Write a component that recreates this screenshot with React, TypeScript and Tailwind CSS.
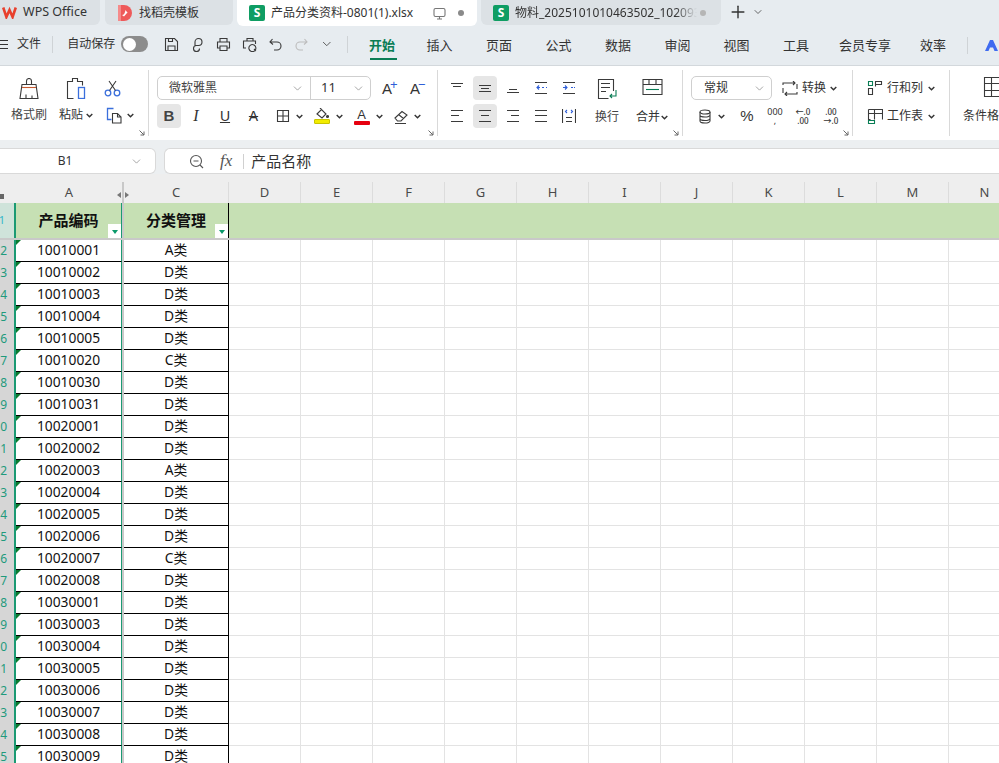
import React from "react";
import { ChevronDown, Plus } from "lucide-react";

const cjk = "font-['Noto_Sans','Noto_Sans_CJK_SC',sans-serif]";

const rows: [string, string, string][] = [
  ["2", "10010001", "A类"],
  ["3", "10010002", "D类"],
  ["4", "10010003", "D类"],
  ["5", "10010004", "D类"],
  ["6", "10010005", "D类"],
  ["7", "10010020", "C类"],
  ["8", "10010030", "D类"],
  ["9", "10010031", "D类"],
  ["10", "10020001", "D类"],
  ["11", "10020002", "D类"],
  ["12", "10020003", "A类"],
  ["13", "10020004", "D类"],
  ["14", "10020005", "D类"],
  ["15", "10020006", "D类"],
  ["16", "10020007", "C类"],
  ["17", "10020008", "D类"],
  ["18", "10030001", "D类"],
  ["19", "10030003", "D类"],
  ["20", "10030004", "D类"],
  ["21", "10030005", "D类"],
  ["22", "10030006", "D类"],
  ["23", "10030007", "D类"],
  ["24", "10030008", "D类"],
  ["25", "10030009", "D类"],
];

const emptyCols = ["D", "E", "F", "G", "H", "I", "J", "K", "L", "M", "N"];
const menus = [
  ["插入", "w-[59px]"],
  ["页面", "w-[60px]"],
  ["公式", "w-[59px]"],
  ["数据", "w-[60px]"],
  ["审阅", "w-[59px]"],
  ["视图", "w-[59px]"],
  ["工具", "w-[60px]"],
  ["会员专享", "w-[78px]"],
  ["效率", "w-[58px]"],
];

function Ico({ w = 18, h = 18, vb, children, className = "" }: { w?: number; h?: number; vb?: string; children: React.ReactNode; className?: string }) {
  return (
    <svg width={w} height={h} viewBox={vb ?? `0 0 ${w} ${h}`} fill="none" stroke="#3a3a3a" strokeWidth="1.1" className={`shrink-0 ${className}`}>
      {children}
    </svg>
  );
}

function Chev({ className = "" }: { className?: string }) {
  return (
    <svg width="7" height="5" viewBox="0 0 7 5" fill="none" stroke="#333" strokeWidth="1.4" className={`shrink-0 ${className}`}>
      <path d="M.7 1 3.500 3.800 6.300 1" />
    </svg>
  );
}

function Launcher() {
  return (
    <svg width="6" height="6" viewBox="0 0 6 6" fill="none" stroke="#666" className="absolute right-[3px] bottom-0">
      <path d="M.5.5 5 5M5 1.500V5H1.500" />
    </svg>
  );
}

function Slot({ w, active, children }: { w: string; active?: boolean; children: React.ReactNode }) {
  return <div className={`${w} h-6 flex items-center justify-center rounded shrink-0 ${active ? "bg-[#e6e6e6]" : ""}`}>{children}</div>;
}

function Lines({ d, blue }: { d: string; blue?: string }) {
  return (
    <Ico w={14} h={14}>
      <path d={d} />
      {blue && <path d={blue} stroke="#2f5fd8" />}
    </Ico>
  );
}

function TabBar() {
  return (
    <div className={`h-[26px] flex ${cjk}`}>
      <div className="w-[100px] h-[25px] bg-[#dce1e5] rounded-br-md flex items-center pl-[2px] gap-[6px]">
        <svg width="15" height="13" viewBox="0 0 15 13" fill="none" stroke="#e8402d" strokeWidth="2.6">
          <path d="M1.200 1.500 4.400 11 7.500 4 10.600 11 13.800 1.500" />
        </svg>
        <span className="text-[12.5px] text-[#333]">WPS Office</span>
      </div>
      <div className="w-[128px] h-[25px] ml-[5px] bg-[#dce1e5] rounded-b-md flex items-center pl-[13px] gap-[7px]">
        <svg width="14" height="16" viewBox="0 0 14 16">
          <path d="M0 0h6a8 8 0 0 1 0 16H0z" fill="#ee5a5a" />
          <path d="M0 0h3v16H0z" fill="#f58a8a" />
          <path d="M4 10c2 0 3-2 3.500-5 .8 1.500 2 2 2 3-1 0-2 2-3.500 3.500z" fill="#fff" />
        </svg>
        <span className="text-[12px] text-[#333]">找稻壳模板</span>
      </div>
      <div className="w-[240px] h-[26px] ml-[4px] bg-white rounded-b-md flex items-center pl-[12px]">
        <div className="w-[16px] h-[16px] bg-[#0f9d63] rounded-[2px] text-white text-[12px] font-bold flex items-center justify-center">S</div>
        <span className="ml-[6px] text-[12px] text-[#333] whitespace-nowrap">产品分类资料-0801(1).xlsx</span>
        <Ico w={13} h={13} className="ml-[20px]">
          <rect x="1" y="1.500" width="11" height="8" rx="1.500" stroke="#777" />
          <path d="M4 12h5M6.500 9.500V12" stroke="#777" />
        </Ico>
        <div className="ml-[12px] w-[6px] h-[6px] rounded-full bg-[#8a8a8a]" />
      </div>
      <div className="w-[240px] h-[25px] ml-[4px] bg-[#dce1e5] rounded-b-md flex items-center pl-[12px] overflow-hidden">
        <div className="w-[16px] h-[16px] bg-[#0f9d63] rounded-[2px] text-white text-[12px] font-bold flex items-center justify-center shrink-0">S</div>
        <span className="ml-[6px] w-[182px] overflow-hidden text-[12px] text-[#333] whitespace-nowrap [mask-image:linear-gradient(to_right,black_88%,transparent)]">物料_2025101010463502_1020930</span>
        <div className="ml-[3px] w-[6px] h-[6px] rounded-full bg-[#b5b5b5]" />
      </div>
      <Plus size={20} strokeWidth={1.7} className="ml-[7px] mt-[2px] text-[#333]" />
      <ChevronDown size={12} strokeWidth={1.6} className="ml-[4px] mt-[6px] text-[#444]" />
    </div>
  );
}

function MenuBar() {
  return (
    <div className={`h-[40px] flex items-center text-[13px] text-[#333] border-b border-[#d3d8dc] ${cjk}`}>
      <svg width="11" height="11" viewBox="0 0 11 11" stroke="#333" className="shrink-0 -mt-[3px]">
        <path d="M0 1.500h8M0 5.500h8M0 9.500h8" />
      </svg>
      <span className="ml-[6px] w-[25px] text-[12px] -mt-[3px]">文件</span>
      <div className="ml-[11px] w-px h-[17px] bg-[#cfd3d6] -mt-[3px]" />
      <span className="ml-[14px] w-[48px] text-[12px] whitespace-nowrap -mt-[3px]">自动保存</span>
      <div className="ml-[6px] w-[28px] h-[16px] rounded-full bg-[#8c8c8c] flex items-center px-[1.5px] -mt-[3px]">
        <div className="w-[13px] h-[13px] rounded-full bg-white" />
      </div>
      <div className="ml-[16px] flex items-center gap-[11px] -mt-[3px]">
        <Ico w={15} h={15}><path d="M1.500 1.500h9l3 3v9h-12zM4.500 1.500v3h4v-3M4 13.500V9h7v4.500" /></Ico>
        <Ico w={15} h={15}><path d="M5 9V5a3.500 3.500 0 1 1 3.500 3.500H6.500a3 3 0 1 0 3 3" /></Ico>
        <Ico w={15} h={15}><path d="M4 5V1.500h7V5M4 11H1.500V5h12v6H11M4 9h7v4.500H4z" /></Ico>
        <Ico w={15} h={15}><path d="M5 4V1.500h6V4M4 11H1.500V4h12v3M7 12a3.500 3.500 0 1 0 5-4 3.500 3.500 0 0 0-5 4zM12 12l2 2" /></Ico>
        <Ico w={15} h={15}><path d="M4.500 2 2 5l3 2.500M2 5h7a3.500 3.500 0 0 1 0 8H6" /></Ico>
        <Ico w={15} h={15}><path d="M10.500 2 13 5l-3 2.500M13 5H6a3.500 3.500 0 0 0 0 8h3" stroke="#bcbcbc" /></Ico>
      </div>
      <ChevronDown size={14} strokeWidth={1.5} className="ml-[11px] text-[#444] -mt-[3px]" />
      <div className="ml-[13px] w-px h-[17px] bg-[#cfd3d6] -mt-[3px]" />
      <div className="ml-[6px] w-[58px] h-[39px] flex items-center justify-center relative">
        <span className="text-[#0a7d55] font-bold">开始</span>
        <div className="absolute bottom-[5px] left-[16px] w-[27px] h-[2px] bg-[#0a7d55]" />
      </div>
      {menus.map(([m, w]) => (
        <span key={m} className={`${w} text-center shrink-0`}>{m}</span>
      ))}
      <div className="ml-[5px] w-px h-[17px] bg-[#cfd3d6]" />
      <svg width="14" height="11" viewBox="0 0 14 11" className="ml-[17px] shrink-0">
        <path d="M0 11 5 0h3l5 11H9.500L8 7.500H5L3.500 11z" fill="#3f6bf0" />
      </svg>
    </div>
  );
}

function Ribbon() {
  return (
    <div className={`h-[74px] bg-white flex text-[#333] text-[12px] ${cjk}`}>
      {/* 剪贴板 */}
      <div className="relative w-[149px] shrink-0 border-r border-[#d9d9d9] my-[4px] pl-[9px]">
        <div className="flex h-[36px] items-center">
          <div className="w-[40px] flex justify-center">
            <Ico w={20} h={21}>
              <path d="M7.500 6.500V3a2.500 2.500 0 0 1 5 0v3.500M3 6.500h14l2 14H1zM7 20.500v-4M13 20.500v-3" />
              <path d="M3 9.500h14" stroke="#c55a30" />
            </Ico>
          </div>
          <div className="w-[50px] flex justify-center ml-[2px]">
            <Ico w={22} h={21}>
              <path d="M4.500 3.500h3v-3h5v3h5v4M8.500 20.500h-6v-17h2" />
              <rect x="13.500" y="9.500" width="6" height="11" stroke="#3a6fdc" strokeWidth="1.300" />
            </Ico>
          </div>
          <Ico w={17} h={17} className="ml-[3px]">
            <circle cx="4" cy="13" r="2.800" stroke="#3a6fdc" strokeWidth="1.300" />
            <circle cx="13" cy="13" r="2.800" stroke="#3a6fdc" strokeWidth="1.300" />
            <path d="M5.500 10.500 12 1M11.500 10.500 5 1" />
          </Ico>
        </div>
        <div className="flex items-center h-[24px] -mt-[3px]">
          <span className="w-[40px] text-center whitespace-nowrap text-[#444]">格式刷</span>
          <span className="ml-[10px] whitespace-nowrap">粘贴</span>
          <Chev className="ml-[3px]" />
          <Ico w={17} h={17} className="ml-[13px]">
            <path d="M5.500 12.500h-4v-11h6" stroke="#3a6fdc" strokeWidth="1.300" />
            <path d="M6.500 6.500h5l3.500 3.500v6H6.500zM11.500 6.500V10H15" />
          </Ico>
          <Chev className="ml-[4px]" />
        </div>
        <Launcher />
      </div>
      {/* 字体 */}
      <div className="relative w-[289px] shrink-0 border-r border-[#d9d9d9] my-[4px] pl-[8px] pt-[6px]">
        <div className="flex items-center h-[24px]">
          <div className="w-[214px] h-[24px] border border-[#cfcfcf] rounded-[5px] flex items-center">
            <span className="w-[152px] pl-[11px] flex items-center justify-between pr-[6px]">
              <span className="text-[#444]">微软雅黑</span>
              <ChevronDown size={13} strokeWidth={1.2} className="text-[#777]" />
            </span>
            <span className="w-px h-full bg-[#cfcfcf]" />
            <span className="flex-1 pl-[10px] pr-[5px] flex items-center justify-between">
              <span className="text-[13px]">11</span>
              <ChevronDown size={13} strokeWidth={1.2} className="text-[#777]" />
            </span>
          </div>
          <span className="ml-[11px] font-['Liberation_Sans'] text-[15px] relative w-[18px] leading-none">A<span className="absolute left-[8px] -top-[3px] text-[#2f5fd8] text-[13px]">+</span></span>
          <span className="ml-[10px] font-['Liberation_Sans'] text-[15px] relative w-[18px] leading-none">A<span className="absolute left-[8px] -top-[3px] text-[#2f5fd8] text-[13px]">−</span></span>
        </div>
        <div className="flex items-center h-[24px] mt-[4px]">
          <Slot w="w-[24px]" active><span className="font-['Liberation_Sans'] text-[15px] font-bold text-[#444]">B</span></Slot>
          <Slot w="w-[30px] ml-[0px]"><span className="font-['Liberation_Serif'] italic text-[16px]">I</span></Slot>
          <Slot w="w-[28px]"><span className="font-['Liberation_Sans'] text-[14px] underline">U</span></Slot>
          <Slot w="w-[29px]"><span className="font-['Liberation_Sans'] text-[14px] line-through">A</span></Slot>
          <Slot w="w-[29px]">
            <Ico w={14} h={14}><path d="M1.500 1.500h11v11h-11zM7 1.500v11M1.500 7h11" /></Ico>
          </Slot>
          <Chev className="-ml-[1px]" />
          <div className="ml-[10px] w-[18px] flex flex-col items-center">
            <Ico w={14} h={11}><path d="M2 6 6.500 1.500 11 6 7 10 2 6zM6.500 1.500 5 0" /><circle cx="12.500" cy="8.500" r="1" fill="#444" /></Ico>
            <div className="w-[16px] h-[5px] bg-[#f2ec00] rounded-[1px] border border-[#c9c400]" />
          </div>
          <Chev className="ml-[5px]" />
          <div className="ml-[10px] w-[17px] flex flex-col items-center">
            <span className="font-['Liberation_Sans'] text-[13px] leading-[13px]">A</span>
            <div className="w-[16px] h-[4px] bg-[#e6000f] rounded-[1px]" />
          </div>
          <Chev className="ml-[6px]" />
          <Ico w={18} h={15} className="ml-[10px]">
            <path d="M2 9 9 2.500l5 3.500-6 6H4.500zM5.500 5.500l5 4M2 14.500h11" />
          </Ico>
          <Chev className="ml-[3px]" />
        </div>
        <Launcher />
      </div>
      {/* 对齐 */}
      <div className="relative w-[245px] shrink-0 border-r border-[#d9d9d9] my-[4px] pl-[7px] pt-[6px] flex">
        <div className="w-[140px] shrink-0">
          <div className="flex h-[24px] gap-[4px]">
            <Slot w="w-[24px]"><Lines d="M1 2.500h12M3 5.500h8" /></Slot>
            <Slot w="w-[24px]" active><Lines d="M1 4.500h12M3 7.500h8M1 10.500h12" /></Slot>
            <Slot w="w-[24px]"><Lines d="M3 8.500h8M1 11.500h12" /></Slot>
            <Slot w="w-[24px]"><Lines d="M1 1.500h12M1 12.500h12" blue="M8 6.500h2M12 6.500h1M5 4.500l-2 2 2 2M3 6.500h3" /></Slot>
            <Slot w="w-[24px]"><Lines d="M1 1.500h12M1 12.500h12" blue="M9 6.500h2M12 6.500h1M3 4.500l2 2-2 2M1 6.500h4" /></Slot>
          </div>
          <div className="flex h-[24px] gap-[4px] mt-[4px]">
            <Slot w="w-[24px]"><Lines d="M1 1.500h12M1 6.500h8M1 12.500h12" /></Slot>
            <Slot w="w-[24px]" active><Lines d="M1 1.500h12M3 6.500h8M1 12.500h12" /></Slot>
            <Slot w="w-[24px]"><Lines d="M1 1.500h12M5 6.500h8M1 12.500h12" /></Slot>
            <Slot w="w-[24px]"><Lines d="M1 1.500h12M1 6.500h12M1 12.500h12" /></Slot>
            <Slot w="w-[24px]"><Lines d="M.5 0v14M13.500 0v14M4 8.500h6M4 12.500h6" blue="M5 1 3.500 2.500 5 4M9 1l1.500 1.500L9 4" /></Slot>
          </div>
        </div>
        <div className="-ml-[2px] w-[48px] flex flex-col items-center">
          <Ico w={22} h={22} className="mt-[2px]">
            <path d="M17.500 13V1.500h-15v19h10M5 5.500h9M5 9.500h9M5 13.500h5" />
            <path d="M20 12v6h-6M16 16l-2 2 2 2" stroke="#0a7d55" />
          </Ico>
          <span className="mt-[8px] whitespace-nowrap text-[#444]">换行</span>
        </div>
        <div className="w-[42px] flex flex-col items-center">
          <Ico w={21} h={20} className="mt-[2px]">
            <path d="M1 1.500h19v15H1zM1 6.500h19M7 1.500v5M14 1.500v5" />
            <path d="M4 11.500h13" stroke="#0a7d55" />
          </Ico>
          <span className="mt-[10px] whitespace-nowrap flex items-center">合并<Chev className="ml-[1px]" /></span>
        </div>
        <Launcher />
      </div>
      {/* 数字 */}
      <div className="relative w-[170px] shrink-0 border-r border-[#d9d9d9] my-[4px] pl-[8px] pt-[6px]">
        <div className="flex items-center h-[24px]">
          <div className="w-[81px] h-[24px] border border-[#cfcfcf] rounded-[5px] flex items-center justify-between pl-[12px] pr-[5px]">
            <span>常规</span>
            <ChevronDown size={13} strokeWidth={1.2} className="text-[#777]" />
          </div>
          <Ico w={16} h={15} className="ml-[10px]">
            <path d="M1 4V2h12M11 0l2 2-2 2M15 11v2H3M5 11l-2 2 2 2M1 7v5M15 3v5" />
          </Ico>
          <span className="ml-[4px] whitespace-nowrap">转换</span>
          <Chev className="ml-[4px]" />
        </div>
        <div className="flex items-center h-[24px] mt-[4px] text-[11px]">
          <Ico w={14} h={15} className="ml-[7px]">
            <ellipse cx="7" cy="3" rx="5" ry="2" />
            <path d="M2 3v9c0 1.100 2.200 2 5 2s5-.9 5-2V3M2 6c0 1.100 2.200 2 5 2s5-.9 5-2M2 9.500c0 1.100 2.200 2 5 2s5-.9 5-2" />
          </Ico>
          <Chev className="ml-[6px]" />
          <span className="ml-[15px] w-[14px] text-[15px] text-center font-['Liberation_Sans']">%</span>
          <span className="ml-[13px] w-[16px] text-[9px] leading-[9px] text-center whitespace-nowrap">000<br />,</span>
          <span className="ml-[12px] w-[16px] text-[8px] leading-[9px] text-center font-medium whitespace-nowrap">←.0<br />.00</span>
          <span className="ml-[12px] w-[16px] text-[8px] leading-[9px] text-center font-medium whitespace-nowrap">.00<br />→.0</span>
        </div>
        <Launcher />
      </div>
      {/* 行列 */}
      <div className="w-[97px] shrink-0 border-r border-[#d9d9d9] my-[4px] pl-[14px] pt-[6px]">
        <div className="flex items-center h-[24px]">
          <Ico w={16} h={16}>
            <path d="M1.500 1.500h4v4h-4z" stroke="#0a7d55" />
            <path d="M1.500 8.500h4v6h-4zM8.500 1.500h6v3h-6zM8.500 1.500v5" />
          </Ico>
          <span className="ml-[4px] whitespace-nowrap">行和列</span>
          <Chev className="ml-[5px]" />
        </div>
        <div className="flex items-center h-[24px] mt-[4px]">
          <Ico w={16} h={16}>
            <path d="M1.500 1.500h14v10M1.500 1.500v10h2M1.500 5.500h14M7.500 1.500v10" />
            <path d="M1.500 12.500h6v3h-6z" stroke="#0a7d55" />
          </Ico>
          <span className="ml-[4px] whitespace-nowrap">工作表</span>
          <Chev className="ml-[5px]" />
        </div>
      </div>
      {/* 条件格式 */}
      <div className="flex-1 overflow-hidden pl-[13px] pt-[10px]">
        <Ico w={16} h={22} className="ml-[20px]">
          <path d="M16 1.500H1.500v19H16M1.500 7.500H16M1.500 14.500H16M8.500 1.500v19" />
        </Ico>
        <span className="block mt-[9px] whitespace-nowrap">条件格式</span>
      </div>
    </div>
  );
}

function FormulaBar() {
  return (
    <div className={`h-[34px] pt-[8px] flex text-[#333] bg-[#eceff1] ${cjk}`}>
      <div className="w-[156px] h-[26px] bg-white rounded-r-md border border-l-0 border-[#d9d9d9] flex items-center">
        <span className="w-[130px] text-center text-[12px]">B1</span>
        <ChevronDown size={13} strokeWidth={1.2} className="text-[#777]" />
      </div>
      <div className="ml-[8px] flex-1 h-[26px] bg-white rounded-l-md border border-r-0 border-[#d9d9d9] flex items-center">
        <svg width="15" height="15" viewBox="0 0 15 15" fill="none" stroke="#555" strokeWidth="1.100" className="ml-[24px]">
          <circle cx="7" cy="7" r="5.500" />
          <path d="M4.500 7h5M11 11l3 3" />
        </svg>
        <span className="ml-[16px] font-['Liberation_Serif'] italic text-[17px] text-[#555]">fx</span>
        <div className="ml-[11px] w-px h-[15px] bg-[#d0d0d0]" />
        <span className="ml-[7px] text-[15px]">产品名称</span>
      </div>
    </div>
  );
}

function ColumnHeader() {
  return (
    <div className={`h-[21px] bg-[#eeeeee] flex items-center text-[13px] text-[#4a4a4a] ${cjk}`}>
      <div className="w-[16px] shrink-0 flex items-end h-full pb-[4px]">
        <div className="w-[4px] h-[5px] bg-[#666]" />
      </div>
      <div className="w-[106px] shrink-0 text-center">A</div>
      <div className="w-[2px] h-full bg-[#c8c8c8] shrink-0" />
      <div className="w-[104px] shrink-0 text-center relative">
        <span className="absolute -left-[7px] top-[9px] w-0 h-0 border-y-[3px] border-y-transparent border-r-[4px] border-r-[#777]" />
        <span className="absolute left-[1px] top-[9px] w-0 h-0 border-y-[3px] border-y-transparent border-l-[4px] border-l-[#777]" />
        C
      </div>
      {emptyCols.map((c) => (
        <div key={c} className="w-[72px] shrink-0 h-full flex items-center justify-center border-l border-[#dcdcdc]">{c}</div>
      ))}
    </div>
  );
}

function FilterBtn() {
  return (
    <div className="absolute right-0 bottom-0 w-[13px] h-[14px] bg-white flex items-center justify-center pt-[2px]">
      <div className="w-0 h-0 border-x-[3.5px] border-x-transparent border-t-[4px] border-t-[#0a9a6a]" />
    </div>
  );
}

function Sheet() {
  return (
    <div className={`text-[#111] text-[13.8px] ${cjk}`}>
      <div className="h-[37px] flex bg-[#c6e0b4] border-b-2 border-[#c9c9c9] font-bold text-[15px]">
        <div className="w-[16px] shrink-0 bg-[#cfe3da] text-[11px] font-normal text-[#33b5c9] overflow-hidden flex items-center justify-end pr-[9px] border-r-2 border-[#1b9a73]">1</div>
        <div className="relative w-[106px] shrink-0 flex items-center justify-center border-r border-[#1b9a73]">
          产品编码
          <FilterBtn />
        </div>
        <div className="w-[2px] shrink-0 bg-[#c9c9c9]" />
        <div className="relative w-[105px] shrink-0 flex items-center justify-center border-r border-black">
          分类管理
          <FilterBtn />
        </div>
        <div className="flex-1" />
      </div>
      {rows.map(([n, code, cat]) => (
        <div key={n} className="h-[22px] flex bg-white">
          <div className="w-[16px] shrink-0 bg-[#d6d6d6] border-r-2 border-[#1b9a73] overflow-hidden text-[12px] text-[#1f9a7c] flex items-center justify-start">
            <span className="w-[7px] flex justify-end shrink-0 pl-0">{n}</span>
          </div>
          <div className="relative w-[106px] shrink-0 flex items-center justify-center pb-[1px] border-r border-[#1b9a73] border-b border-b-black">
            <span className="absolute left-0 top-0 w-0 h-0 border-t-[5px] border-t-[#0b7a2f] border-r-[5px] border-r-transparent" />
            {code}
          </div>
          <div className="w-[2px] shrink-0 bg-[#c9c9c9]" />
          <div className="w-[105px] shrink-0 flex items-center justify-center pb-[1px] border-r border-black border-b border-b-black">{cat}</div>
          {emptyCols.map((c) => (
            <div key={c} className="w-[72px] shrink-0 border-r border-b border-[#e3e3e3]" />
          ))}
        </div>
      ))}
    </div>
  );
}

export default function App() {
  return (
    <div className="w-[999px] h-[763px] overflow-hidden bg-[#e7ecf0]">
      <TabBar />
      <MenuBar />
      <Ribbon />
      <FormulaBar />
      <div className="h-[8px] bg-[#eeeeee]" />
      <ColumnHeader />
      <Sheet />
    </div>
  );
}
